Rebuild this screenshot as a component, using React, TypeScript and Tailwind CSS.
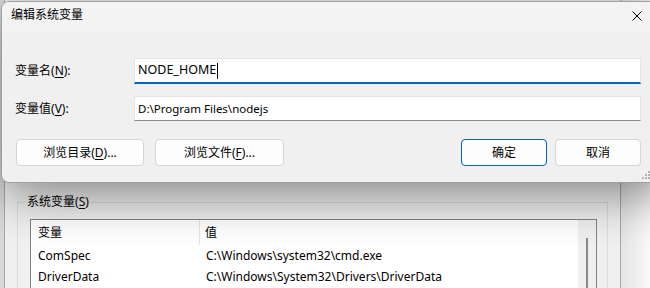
import React from "react";

const font = "font-['Noto_Sans','Noto_Sans_CJK_SC',sans-serif]";

const Mn = ({ k }: { k: string }) => (
  <>
    (<span className="underline underline-offset-2">{k}</span>)
  </>
);

const Btn = ({
  children,
  w,
  primary,
}: {
  children: React.ReactNode;
  w: string;
  primary?: boolean;
}) => (
  <button
    className={`${w} h-[27px] rounded-[4px] bg-[#fdfdfd] text-[12px] text-black flex items-center justify-center ${
      primary ? "border border-[#0067c0]" : "border border-[#d5d5d5]"
    }`}
  >
    {children}
  </button>
);

const ResizeGrip = () => (
  <svg width="9" height="9" viewBox="0 0 9 9" className="absolute left-[640px] bottom-[2px]">
    {[
      [6, 0],
      [3, 3],
      [6, 3],
      [0, 6],
      [3, 6],
      [6, 6],
    ].map(([x, y], i) => (
      <rect key={i} x={x} y={y} width="2" height="2" fill="#b4b4b4" />
    ))}
  </svg>
);

// the window behind the dialog
const BackWindow = () => (
  <div className="flex h-full">
    <div className="w-[4px] bg-[#d9d9d9]" />
    <div className="w-[617px] h-full bg-[#f0f0f0] border-l border-r border-[#a9a9a9] pt-[194px] pl-[12px]">
      <fieldset className="w-[591px] h-[120px] border border-[#dcdcdc] pl-[12px]">
        <legend className="ml-[-5px] px-[2px] text-[12px] leading-[16px] text-black">
          系统变量<Mn k="S" />
        </legend>
        <div className="mt-[9px] w-[567px] h-[80px] bg-white border border-[#828282] flex">
          <div className="flex-1 text-[12px] text-black">
            <div className="flex h-[25px] items-center">
              <div className="w-[169px] h-full pl-[7px] flex items-center border-r border-[#e5e5e5]">变量</div>
              <div className="pl-[5px]">值</div>
            </div>
            {[
              ["ComSpec", "C:\\Windows\\system32\\cmd.exe"],
              ["DriverData", "C:\\Windows\\System32\\Drivers\\DriverData"],
            ].map(([k, v]) => (
              <div key={k} className="flex h-[21px] items-center">
                <div className="w-[169px] pl-[7px]">{k}</div>
                <div className="pl-[6px]">{v}</div>
              </div>
            ))}
          </div>
          <div className="w-[18px] bg-[#f0f0f0] flex justify-center pt-[18px]">
            <div className="w-[2px] h-full bg-[#8a8a8a]" />
          </div>
        </div>
      </fieldset>
    </div>
    <div className="flex-1 bg-gradient-to-r from-[#e4e4e4] to-[#fafafa]" />
  </div>
);

export default function App() {
  return (
    <div className={`relative w-[650px] h-[288px] overflow-hidden bg-[#6b6b6b] ${font}`}>
      <BackWindow />

      {/* dialog */}
      <div className="absolute left-[1px] top-[1px] w-[670px] h-[182px] rounded-[8px] border border-[#a0a0a0] bg-[#f0f0f0] overflow-hidden shadow-[0_12px_50px_rgba(0,0,0,0.45)]">
        <div className="h-[29px] bg-[#f3f3f3] flex items-center pl-[9px] pr-[28px] pb-[3px] justify-between">
          <span className="text-[12px] text-black">编辑系统变量</span>
          <svg width="10" height="10" viewBox="0 0 10 10" className="mt-[2px]">
            <path d="M0.5 0.5 L9.5 9.5 M9.5 0.5 L0.5 9.5" stroke="#000" strokeWidth="1" />
          </svg>
        </div>
        <div className="pt-[27px] pl-[13px] text-[12px] text-black">
          <div className="flex items-center h-[26px]">
            <div className="w-[119px]">
              变量名<Mn k="N" />:
            </div>
            <div className="w-[507px] h-[26px] bg-white border border-[#e5e5e5] border-b-2 border-b-[#0067c0] flex items-center pl-[3px] text-[12.5px]">
              NODE_HOME
              <span className="inline-block w-px h-[16px] bg-black ml-[1px]" />
            </div>
          </div>
          <div className="flex items-center h-[25px] mt-[12px]">
            <div className="w-[119px]">
              变量值<Mn k="V" />:
            </div>
            <div className="w-[507px] h-[25px] bg-white border border-[#e5e5e5] border-b-[#8a8a8a] flex items-center pl-[3px] text-[11.5px]">
              D:\Program Files\nodejs
            </div>
          </div>
          <div className="flex mt-[18px] pl-[1px]">
            <div className="flex gap-[11px]">
              <Btn w="w-[128px]">
                浏览目录<Mn k="D" />...
              </Btn>
              <Btn w="w-[129px]">
                浏览文件<Mn k="F" />...
              </Btn>
            </div>
            <div className="flex gap-[8px] ml-[177px]">
              <Btn w="w-[86px]" primary>
                确定
              </Btn>
              <Btn w="w-[86px]">取消</Btn>
            </div>
          </div>
        </div>
        <ResizeGrip />
      </div>
    </div>
  );
}
